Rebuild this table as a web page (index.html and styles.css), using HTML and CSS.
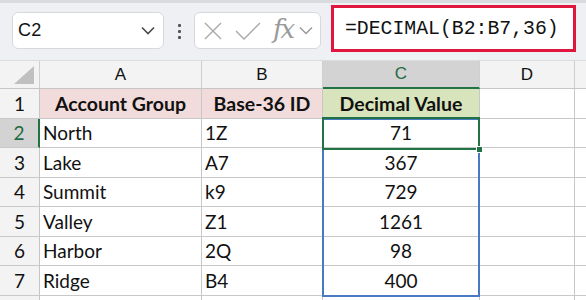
FILE: index.html
```html
<!DOCTYPE html>
<html>
<head>
<meta charset="utf-8">
<link rel="stylesheet" href="styles.css">
</head>
<body>
<div class="topband"></div>
<div class="toolbar">
  <div class="namebox">
    <span class="name">C2</span>
    <svg class="chev" width="14" height="9" viewBox="0 0 14 9"><path d="M1 1.5 L7 7.5 L13 1.5" fill="none" stroke="#4a4a4a" stroke-width="1.6"/></svg>
  </div>
  <div class="dots"><i></i><i></i><i></i></div>
  <div class="fnbox">
    <svg width="20" height="20" viewBox="0 0 20 20"><path d="M2 2 L18 18 M18 2 L2 18" stroke="#a9a9a9" stroke-width="1.4" fill="none"/></svg>
    <svg width="26" height="20" viewBox="0 0 26 20"><path d="M1 10 L9 18 L25 2" stroke="#a9a9a9" stroke-width="1.4" fill="none"/></svg>
    <span class="fx">fx</span>
    <svg width="14" height="9" viewBox="0 0 14 9"><path d="M1 1.5 L7 7.5 L13 1.5" fill="none" stroke="#9a9a9a" stroke-width="1.5"/></svg>
  </div>
  <div class="formula">=DECIMAL(B2:B7,36)</div>
</div>
<div class="sheet">
  <div class="grid">
    <div class="ch corner"><span class="tri"></span></div>
    <div class="ch">A</div>
    <div class="ch">B</div>
    <div class="ch sel">C</div>
    <div class="ch">D</div>
    <div class="ch last"></div>

    <div class="rh">1</div>
    <div class="c hdr pink">Account Group</div>
    <div class="c hdr pink">Base-36 ID</div>
    <div class="c hdr green">Decimal Value</div>
    <div class="c"></div><div class="c last"></div>

    <div class="rh rsel">2</div>
    <div class="c">North</div><div class="c">1Z</div><div class="c num">71</div>
    <div class="c"></div><div class="c last"></div>

    <div class="rh">3</div>
    <div class="c">Lake</div><div class="c">A7</div><div class="c num">367</div>
    <div class="c"></div><div class="c last"></div>

    <div class="rh">4</div>
    <div class="c">Summit</div><div class="c">k9</div><div class="c num">729</div>
    <div class="c"></div><div class="c last"></div>

    <div class="rh">5</div>
    <div class="c">Valley</div><div class="c">Z1</div><div class="c num">1261</div>
    <div class="c"></div><div class="c last"></div>

    <div class="rh">6</div>
    <div class="c">Harbor</div><div class="c">2Q</div><div class="c num">98</div>
    <div class="c"></div><div class="c last"></div>

    <div class="rh">7</div>
    <div class="c">Ridge</div><div class="c">B4</div><div class="c num">400</div>
    <div class="c"></div><div class="c last"></div>

    <div class="rh"></div>
    <div class="c"></div><div class="c"></div><div class="c"></div>
    <div class="c"></div><div class="c last"></div>
  </div>
  <div class="range"></div>
  <div class="active"></div>
  <div class="handle"></div>
</div>
</body>
</html>
```
FILE: styles.css
```css
* { box-sizing: border-box; }
html, body { margin: 0; padding: 0; overflow: hidden; }
body { width: 586px; height: 300px; background: #fff; font-family: "Liberation Sans", Arial, sans-serif; }

.topband { height: 3px; background: #d9dbde; }
.toolbar {
  height: 58px; background: #eef0f3; display: flex; align-items: flex-start;
  border-bottom: 1px solid #dcdcdc;
}
.namebox {
  margin: 9px 0 0 12px; width: 152px; height: 37px; background: #fff;
  border: 1px solid #d6d8db; border-radius: 6px; display: flex; align-items: center;
  justify-content: space-between; padding: 0 8px 0 5px;
}
.name { font-size: 18px; color: #111; letter-spacing: 0.2px; }
.dots { margin: 21px 0 0 14px; width: 4px; display: flex; flex-direction: column; gap: 3px; }
.dots i { display: block; width: 3px; height: 3px; background: #555; border-radius: 1px; }
.fnbox {
  margin: 9px 0 0 12px; width: 127px; height: 37px; background: #fff;
  border: 1px solid #d6d8db; border-radius: 6px; display: flex; align-items: center;
  padding: 0 0 0 8px; gap: 12px;
}
.fx { font-family: "DejaVu Serif", "Liberation Serif", serif; font-style: italic; font-size: 26px; color: #9a9a9a; margin-left: 0; margin-right: -6px; line-height: 1; padding-bottom: 4px; letter-spacing: -2px; }
.formula {
  margin: 2px 0 0 10px; width: 245px; height: 47px; background: #fff;
  border: 3px solid #e0163f; font-family: "Liberation Mono", monospace; font-size: 19.8px;
  color: #111; display: flex; align-items: center; padding-left: 11px; padding-top: 1px;
}

.sheet { position: relative; }
.grid {
  display: grid;
  grid-template-columns: 40px 162px 121px 157px 95px 11px;
  grid-template-rows: 28px repeat(7, 29.5px) 5px;
}
.ch {
  background: #f3f3f3; border-right: 1px solid #cfcfcf; border-bottom: 1px solid #c6c6c6;
  display: flex; align-items: center; justify-content: center;
  font-family: "Liberation Sans", Arial, sans-serif; font-size: 17px; color: #111;
}
.ch.last { border-right: none; }
.ch.sel { background: #d3d3d3; color: #1e6b41; border-bottom: 2px solid #217346; }
.corner { position: relative; }
.tri {
  position: absolute; right: 5px; bottom: 4px; width: 0; height: 0;
  border-left: 20px solid transparent; border-bottom: 18px solid #c0c0c0;
}
.rh {
  background: #f3f3f3; border-right: 1px solid #c6c6c6; border-bottom: 1px solid #c8c8c8;
  display: flex; align-items: center; justify-content: center;
  font-family: "Lato", sans-serif; font-size: 19px; color: #111;
}
.rh.rsel { background: #d3d3d3; color: #1e6b41; border-right: 2px solid #217346; }
.c {
  border-right: 1px solid #c8c8c8; border-bottom: 1px solid #c8c8c8;
  font-family: "Lato", sans-serif; font-size: 19px; color: #111;
  display: flex; align-items: center; padding-left: 3px; white-space: nowrap; overflow: hidden;
}
.c.last { border-right: none; }
.c.hdr { justify-content: center; font-weight: bold; padding-left: 0; font-size: 19.5px; }
.c.pink { background: #f2dcdb; }
.c.green { background: #d8e4bc; }
.c.num { justify-content: center; padding-left: 0; }

.range {
  position: absolute; left: 322px; top: 57px; width: 158px; height: 179px;
  border: 2px solid #4a78c2;
}
.active {
  position: absolute; left: 322px; top: 56px; width: 158px; height: 33px;
  border: 2px solid #217346;
}
.handle {
  position: absolute; left: 476px; top: 85px; width: 7px; height: 7px;
  background: #217346; border: 1px solid #fff;
}
```
